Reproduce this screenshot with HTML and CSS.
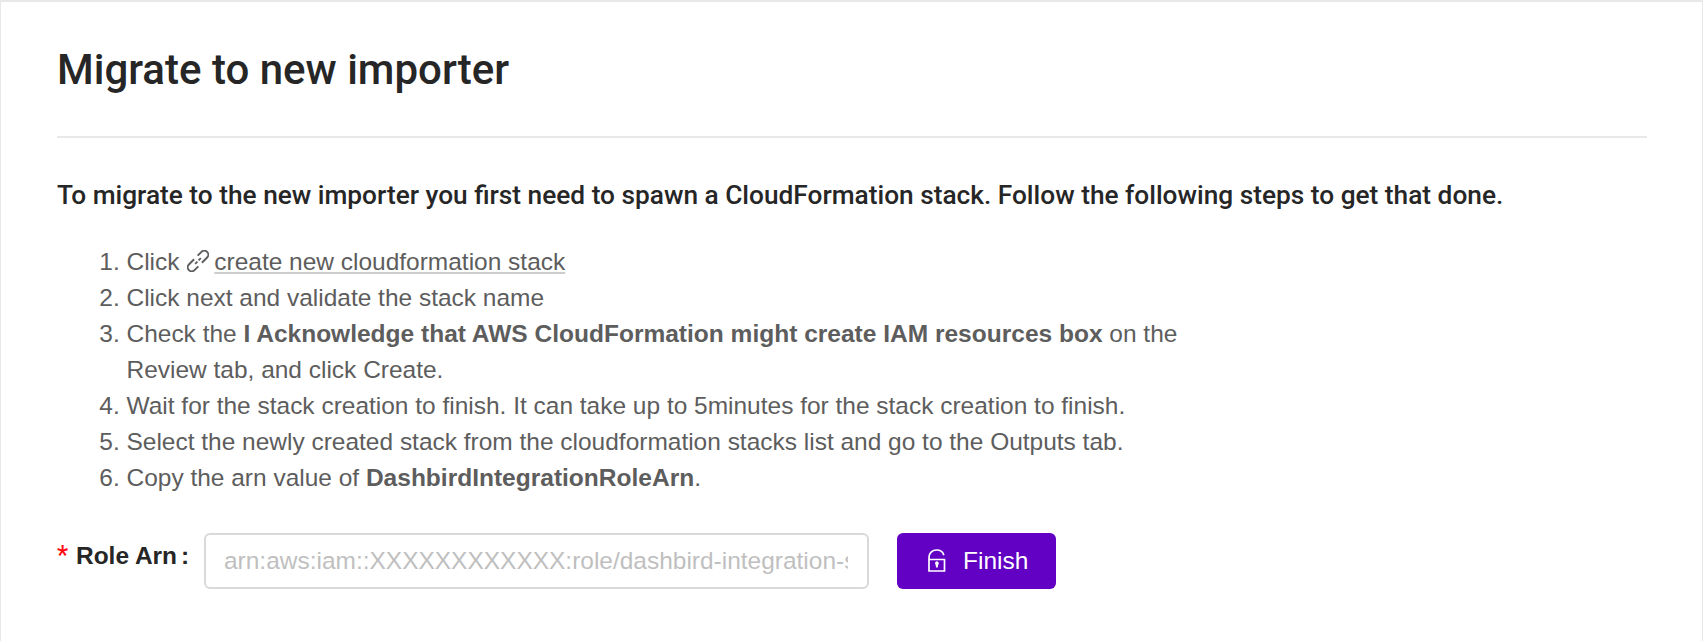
FILE: index.html
```html
<!DOCTYPE html>
<html lang="en">
<head>
<meta charset="utf-8">
<title>Migrate to new importer</title>
<link rel="stylesheet" href="styles.css">
</head>
<body>
<main class="card">
  <h1 class="title">Migrate to new importer</h1>
  <h2 class="intro">To migrate to the new importer you first need to spawn a CloudFormation stack. Follow the following steps to get that done.</h2>
  <ol class="steps">
    <li>Click <svg class="link-icon" viewBox="0 0 22 22"><g transform="translate(11 11) rotate(-45)"><path d="M-1.500 -4H-8.900a4 4 0 0 0 0 8H-3.500M1.500 4H8.900a4 4 0 0 0 0-8H3.500M-4 0H-.8M.8 0H4"/></g></svg><a class="stack-link">create new cloudformation stack</a></li>
    <li>Click next and validate the stack name</li>
    <li>Check the <strong>I Acknowledge that AWS CloudFormation might create IAM resources box</strong> on the Review tab, and click Create.</li>
    <li>Wait for the stack creation to finish. It can take up to 5minutes for the stack creation to finish.</li>
    <li>Select the newly created stack from the cloudformation stacks list and go to the Outputs tab.</li>
    <li>Copy the arn value of <strong>DashbirdIntegrationRoleArn</strong>.</li>
  </ol>
  <form class="form">
    <label class="label" for="arn"><span class="required">*</span>Role Arn<span class="colon">:</span></label>
    <input class="input" id="arn" type="text" placeholder="arn:aws:iam::XXXXXXXXXXXX:role/dashbird-integration-stack">
    <button class="finish" type="button"><svg class="lock-icon" viewBox="0 0 18 23"><path d="M1 10.500h15.500v11.500H1zM1 10.500V8.300C1 4 4.200 1 8.500 1c3.800 0 6.600 2 7.300 5.200"/><path class="keyhole" d="M7 14.300a1.900 1.900 0 1 1 3.300 1.200L9.700 18.500H8.100L7.500 15.500Z"/></svg><span>Finish</span></button>
  </form>
</main>
</body>
</html>
```
FILE: styles.css
```css
* { box-sizing: border-box; }
body {
  margin: 0;
  background: #e8e8e8;
  color: #5d5d5d;
  font: 24.48px/36px "Liberation Sans", Arial, sans-serif;
}
.card {
  height: 641px;
  padding: 40px 55px 0 56px;
  border: 1px solid #e8e8e8;
  border-top-width: 2px;
  border-bottom: 0;
  border-radius: 3px 3px 0 0;
  background: #fff;
}
.title {
  margin: 0 0 39px;
  height: 96px;
  border-bottom: 2px solid #e8e8e8;
  color: #262626;
  font: 500 42px/56px Roboto, sans-serif;
}
.intro {
  margin: 0 0 31px;
  color: #262626;
  font: 500 26.25px/36px Roboto, sans-serif;
}
.steps {
  width: 1144px;
  margin: 0;
  padding: 0 0 0 69.5px;
}
.steps strong { font-size: 24.53px; }
.link-icon {
  width: 22px;
  height: 22px;
  margin: 0 5px 0 1px;
  vertical-align: -2px;
  fill: none;
  stroke: currentColor;
  stroke-width: 1.9;
}
.stack-link {
  text-decoration: underline 2px #cdcdcd;
  text-underline-offset: 2px;
}
.form {
  display: flex;
  align-items: flex-start;
  margin-top: 37px;
}
.label {
  width: 147px;
  padding-top: 5px;
  color: #262626;
  font-weight: 700;
  white-space: nowrap;
}
.required {
  display: inline-block;
  width: 19px;
  color: #ff0a14;
  font: 500 25px/30px Roboto, sans-serif;
}
.colon { margin-left: 4px; }
.input {
  width: 665px;
  height: 56px;
  padding: 0 19px 0 18px;
  border: 2px solid #d9d9d9;
  border-radius: 6px;
  font: inherit;
}
.input::placeholder { color: #bfbfbf; opacity: 1; }
.finish {
  display: flex;
  align-items: center;
  gap: 17px;
  width: 159px;
  height: 56px;
  margin-left: 28px;
  padding: 0 0 0 31px;
  border: 0;
  border-radius: 6px;
  background: #6200c4;
  color: #fff;
  font: inherit;
}
.lock-icon {
  width: 18px;
  height: 23px;
  margin-top: -1px;
  fill: none;
  stroke: currentColor;
  stroke-width: 1.7;
}
.keyhole { fill: currentColor; stroke: none; }
```
